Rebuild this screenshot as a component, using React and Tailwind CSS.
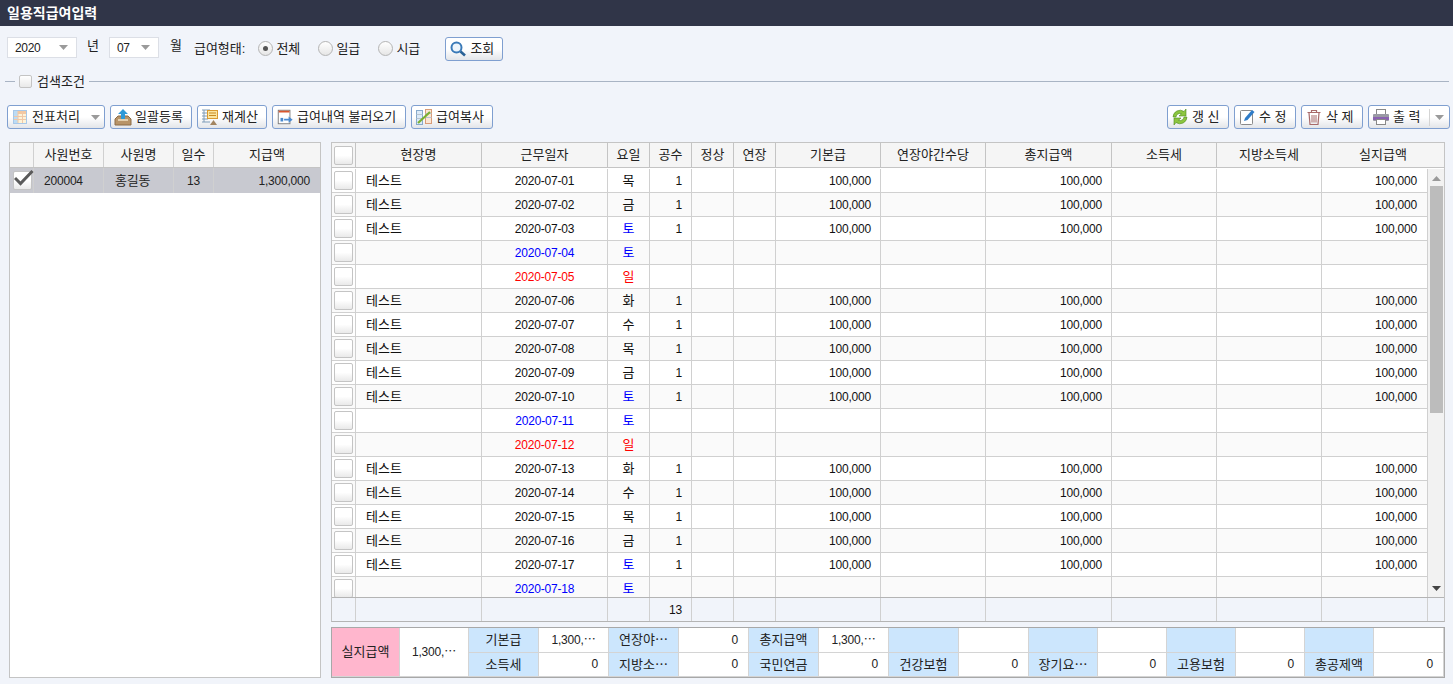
const FONT = "font-['Liberation_Sans','Noto_Sans_CJK_KR',sans-serif]";

const rowData = [
  ['테스트', '2020-07-01', '목', ''],
  ['테스트', '2020-07-02', '금', ''],
  ['테스트', '2020-07-03', '토', 'day'],
  ['', '2020-07-04', '토', 'sat'],
  ['', '2020-07-05', '일', 'sun'],
  ['테스트', '2020-07-06', '화', ''],
  ['테스트', '2020-07-07', '수', ''],
  ['테스트', '2020-07-08', '목', ''],
  ['테스트', '2020-07-09', '금', ''],
  ['테스트', '2020-07-10', '토', 'day'],
  ['', '2020-07-11', '토', 'sat'],
  ['', '2020-07-12', '일', 'sun'],
  ['테스트', '2020-07-13', '화', ''],
  ['테스트', '2020-07-14', '수', ''],
  ['테스트', '2020-07-15', '목', ''],
  ['테스트', '2020-07-16', '금', ''],
  ['테스트', '2020-07-17', '토', 'day'],
  ['', '2020-07-18', '토', 'sat'],
];

const headers = ['현장명', '근무일자', '요일', '공수', '정상', '연장', '기본급', '연장야간수당', '총지급액', '소득세', '지방소득세', '실지급액'];

const Caret = () => (
  <svg width="9" height="5" viewBox="0 0 9 5"><path d="M0 0h9L4.5 5z" fill="#9a9a9a" /></svg>
);

const Box = ({ checked }) => (
  <div className="relative w-[19px] h-[19px] rounded-[2px] border border-[#c4c4c4] bg-gradient-to-b from-white via-white to-[#e9e9e9]">
    {checked && (
      <svg className="absolute -top-[3px] left-0" width="20" height="18" viewBox="0 0 20 18">
        <path d="M1 9l5.500 5.500L18.500 2" fill="none" stroke="#5a5a5a" strokeWidth="3" />
      </svg>
    )}
  </div>
);

const Select = ({ value, w }) => (
  <div className={`${w} h-[21px] flex items-center justify-between pl-[7px] pr-[8px] bg-white border border-[#dcdfe6] text-xs tracking-[-0.3px] text-[#222]`}>
    <span>{value}</span>
    <Caret />
  </div>
);

const Radio = ({ label, on, w }) => (
  <div className={`${w} flex items-center gap-[3px]`}>
    <div className="w-[15px] h-[15px] rounded-full border border-[#b4b4b4] bg-gradient-to-b from-white to-[#e6e6e6] flex items-center justify-center">
      {on && <div className="w-[5px] h-[5px] rounded-full bg-[#555]" />}
    </div>
    <span className="text-[13px] text-[#222]">{label}</span>
  </div>
);

const Btn = ({ w, icon, children, caret, split }) => (
  <div className={`${w} h-6 shrink-0 flex items-center gap-[3px] pl-[3px] rounded-[3px] border border-[#7f9fd0] bg-gradient-to-b from-white via-white to-[#e3e5e9] text-[13px] text-[#222]`}>
    {icon}
    <span className="whitespace-pre">{children}</span>
    {caret && <span className="ml-[8px] flex"><Caret /></span>}
    {split && (
      <span className="ml-auto flex items-center h-full">
        <span className="w-px h-[17px] bg-[#d4d4d4] mr-[5px]" />
        <span className="mr-[5px] flex"><Caret /></span>
      </span>
    )}
  </div>
);

const IconSearch = () => (
  <svg width="18" height="18" viewBox="0 0 18 18">
    <circle cx="7.500" cy="7.500" r="5" fill="#eef5fb" stroke="#3a7ab8" strokeWidth="2" />
    <path d="M11.500 11.500l4.500 4" stroke="#2a6296" strokeWidth="2.600" />
  </svg>
);
const IconTable = () => (
  <svg width="18" height="16" viewBox="0 0 18 16">
    <rect x="2.500" y="1.500" width="13" height="13" fill="#fdf3d8" stroke="#a8c8e8" />
    <path d="M3 2h12v3H3z" fill="#f4c8a0" />
    <path d="M3 2h4v12H3z" fill="#bcdcf4" />
    <path d="M7 2v12M11.500 2v12M3 7.500h12M3 10.500h12" stroke="#f0c8a8" strokeWidth="1" />
  </svg>
);
const IconUpload = () => (
  <svg width="18" height="18" viewBox="0 0 18 18">
    <path d="M1 11l3-3h10l3 3v6H1z" fill="#b89468" stroke="#8c6c46" />
    <path d="M4 11h10v2H4z" fill="#e3cfae" />
    <path d="M9 1l5 5h-3v5H7V6H4z" fill="#2f9ad8" />
  </svg>
);
const IconCalc = () => (
  <svg width="18" height="18" viewBox="0 0 18 18">
    <path d="M1 2h8M1 5h6M1 8h6M1 11h6M1 14h8M3 2v12" stroke="#7f9cb8" strokeWidth="1" fill="none" />
    <rect x="6.500" y="2.500" width="10" height="8" fill="#fbe6a0" stroke="#d99a30" />
    <path d="M8 5h7M8 7.500h7" stroke="#c98a20" />
    <path d="M9 17l3.500-5 3.500 5z" fill="#a38560" />
  </svg>
);
const IconLoad = () => (
  <svg width="18" height="20" viewBox="0 0 20 20">
    <rect x="2.500" y="2.500" width="13" height="15" fill="#fff" stroke="#777" />
    <path d="M3 3h12v2H3z" fill="#d9572f" />
    <path d="M9 12h5v-2.500l4.500 3.500-4.500 3.500V14H9z" fill="#4a8ad0" />
    <path d="M5 11h3v4H5z" fill="#4a8ad0" />
  </svg>
);
const IconCopy = () => (
  <svg width="18" height="18" viewBox="0 0 18 18">
    <rect x="1.500" y="2.500" width="6" height="14" fill="#dceaf8" stroke="#88aacc" />
    <rect x="10.500" y="1.500" width="6" height="14" fill="#fbe6d4" stroke="#d89c78" />
    <path d="M1.500 6.500h6M1.500 10.500h6M10.500 5.500h6M10.500 9.500h6" stroke="#b8c4d0" />
    <path d="M3 15L15 4" stroke="#7ab030" strokeWidth="2.200" />
  </svg>
);
const IconRefresh = () => (
  <svg width="18" height="18" viewBox="0 0 18 18">
    <path d="M2 9a7 7 0 0 1 11-5.500L15 1v7H8l2.500-2.300A4 4 0 0 0 5 9z" fill="#8cc63f" stroke="#4d8a1e" strokeWidth="0.600" />
    <path d="M16 9a7 7 0 0 1-11 5.500L3 17v-7h7l-2.500 2.300A4 4 0 0 0 13 9z" fill="#8cc63f" stroke="#4d8a1e" strokeWidth="0.600" />
  </svg>
);
const IconEdit = () => (
  <svg width="18" height="18" viewBox="0 0 18 18">
    <rect x="2.500" y="2.500" width="12" height="14" rx="1" fill="#fff" stroke="#8a8a8a" />
    <path d="M6 13l1-3 7-8 2.500 2-7 8z" fill="#2f7cc8" />
  </svg>
);
const IconTrash = () => (
  <svg width="18" height="18" viewBox="0 0 18 18" fill="none" stroke="#a86a6a">
    <path d="M2.500 4.500h13M6.500 4.500v-2h5v2" strokeWidth="1.200" />
    <path d="M4 5l1 11.500h8L14 5" strokeWidth="1.200" />
    <path d="M7 7v7.500M9 7v7.500M11 7v7.500" />
  </svg>
);
const IconPrint = () => (
  <svg width="18" height="18" viewBox="0 0 18 18">
    <rect x="4.500" y="1.500" width="9" height="5" fill="#fff" stroke="#888" />
    <rect x="1" y="6" width="16" height="7" rx="1" fill="#9a9aa4" />
    <rect x="1" y="9" width="16" height="3" fill="#8a62b0" />
    <rect x="4.500" y="11.500" width="9" height="5" fill="#fff" stroke="#888" />
  </svg>
);

const lineCell = 'border-r border-[#d0d0d0] flex items-center h-full';

const LeftGrid = () => (
  <div className="w-[312px] h-[536px] shrink-0 border border-[#c4c4c4] bg-white">
    <div className="h-[25px] grid grid-cols-[24px_70px_70px_40px_1fr] bg-[#f5f5f5] border-b border-[#c4c4c4] text-[13px] text-[#222]">
      <div className="border-r border-[#d0d0d0]" />
      <div className={`${lineCell} justify-center`}>사원번호</div>
      <div className={`${lineCell} justify-center`}>사원명</div>
      <div className={`${lineCell} justify-center`}>일수</div>
      <div className="flex items-center justify-center">지급액</div>
    </div>
    <div className="h-[25px] grid grid-cols-[24px_70px_70px_40px_1fr] bg-[#c8c9d0] text-xs tracking-[-0.2px] text-[#222]">
      <div className="flex items-center pl-[3px] border-r border-[#d0d0d0]">
        <Box checked />
      </div>
      <div className="border-r border-[#d0d0d0] flex items-center pl-[10px]">200004</div>
      <div className="border-r border-[#d0d0d0] flex items-center pl-[11px] text-[13px]">홍길동</div>
      <div className="border-r border-[#d0d0d0] flex items-center justify-center">13</div>
      <div className="flex items-center justify-end pr-[10px]">1,300,000</div>
    </div>
  </div>
);

const Row = ({ row, alt }) => {
  const [site, date, day, kind] = row;
  const filled = site !== '';
  const dateColor = kind === 'sat' ? 'text-[#0000ff]' : kind === 'sun' ? 'text-[#ff0000]' : 'text-[#111]';
  const dayColor = kind === 'sun' ? 'text-[#ff0000]' : kind === '' ? 'text-[#111]' : 'text-[#0000ff]';
  const amt = 'border-r border-[#d0d0d0] flex items-center justify-end pr-[9px]';
  return (
    <div className={`h-6 shrink-0 grid grid-cols-[24px_126px_126px_42px_42px_42px_42px_105px_105px_126px_105px_105px_106px] border-b border-[#d0d0d0] text-xs tracking-[-0.2px] text-[#111] ${alt ? 'bg-[#fafafa]' : 'bg-white'}`}>
      <div className="flex items-center pl-[2px] border-r border-[#d0d0d0]"><Box /></div>
      <div className="border-r border-[#d0d0d0] flex items-center pl-[10px] text-[13px] tracking-normal">{site}</div>
      <div className={`border-r border-[#d0d0d0] flex items-center justify-center ${dateColor}`}>{date}</div>
      <div className={`border-r border-[#d0d0d0] flex items-center justify-center text-[13px] tracking-normal ${dayColor}`}>{day}</div>
      <div className={amt}>{filled ? '1' : ''}</div>
      <div className="border-r border-[#d0d0d0]" />
      <div className="border-r border-[#d0d0d0]" />
      <div className={amt}>{filled ? '100,000' : ''}</div>
      <div className="border-r border-[#d0d0d0]" />
      <div className={amt}>{filled ? '100,000' : ''}</div>
      <div className="border-r border-[#d0d0d0]" />
      <div className="border-r border-[#d0d0d0]" />
      <div className="border-r border-[#d0d0d0] flex items-center justify-end pr-[10px]">{filled ? '100,000' : ''}</div>
    </div>
  );
};

const Scrollbar = () => (
  <div className="w-4 shrink-0 flex flex-col items-center bg-[#f2f2f2] pt-[7px] pb-[6px]">
    <svg width="9" height="5" viewBox="0 0 9 5"><path d="M0 5h9L4.500 0z" fill="#9a9a9a" /></svg>
    <div className="mt-[5px] w-[13px] h-[227px] bg-[#bcbcbc]" />
    <svg className="mt-auto" width="9" height="5" viewBox="0 0 9 5"><path d="M0 0h9L4.500 5z" fill="#444" /></svg>
  </div>
);

const RightGrid = () => (
  <div className="w-[1114px] h-[480px] shrink-0 flex flex-col border border-[#c4c4c4] border-b-[#b4b4b4]">
    <div className="h-[25px] shrink-0 grid grid-cols-[24px_126px_126px_42px_42px_42px_42px_105px_105px_126px_105px_105px_1fr] bg-[#f5f5f5] border-b border-[#c4c4c4] text-[13px] text-[#222]">
      <div className="flex items-center pl-[2px] border-r border-[#c4c4c4]"><Box /></div>
      {headers.map((h, i) => (
        <div key={h} className={`flex items-center justify-center ${i < headers.length - 1 ? 'border-r border-[#c4c4c4]' : ''}`}>{h}</div>
      ))}
    </div>
    <div className="h-[430px] shrink-0 flex border-b border-[#b4b4b4] bg-white pt-px">
      <div className="flex-1 min-w-0 h-full overflow-hidden flex flex-col">
        {rowData.map((row, i) => (
          <Row key={row[1]} row={row} alt={i % 2 === 1} />
        ))}
      </div>
      <Scrollbar />
    </div>
    <div className="flex-1 grid grid-cols-[24px_126px_126px_42px_42px_42px_42px_105px_105px_126px_105px_105px_106px_1fr] text-xs tracking-[-0.2px] text-[#111]">
      {Array.from({ length: 14 }).map((_, i) => (
        <div key={i} className={`flex items-center justify-end pr-[9px] ${i < 13 ? 'border-r border-[#d0d0d0]' : ''}`}>
          {i === 4 ? '13' : ''}
        </div>
      ))}
    </div>
  </div>
);

const SumLabel = ({ children, span }) => (
  <div className={`${span ? 'row-span-2 bg-[#ffb6cd]' : 'bg-[#cce6fd]'} flex items-center justify-center border-r border-b border-[#d4d4d4] text-[13px] text-[#222]`}>
    {children}
  </div>
);

const SumValue = ({ children, span, center }) => (
  <div className={`${span ? 'row-span-2' : ''} flex items-center ${center ? 'justify-center' : 'justify-end pr-[10px]'} border-r border-b border-[#d4d4d4] text-xs tracking-[-0.2px] text-[#222]`}>
    {children}
  </div>
);

const Summary = () => (
  <div className="mt-[5px] w-[1114px] h-[51px] grid grid-cols-[68px_69px_repeat(8,70px)_repeat(5,69px)_1fr] grid-rows-2 border border-[#a8a8a8] bg-white">
    <SumLabel span>실지급액</SumLabel>
    <SumValue span center>1,300,⋯</SumValue>
    <SumLabel>기본급</SumLabel>
    <SumValue center>1,300,⋯</SumValue>
    <SumLabel>연장야⋯</SumLabel>
    <SumValue>0</SumValue>
    <SumLabel>총지급액</SumLabel>
    <SumValue center>1,300,⋯</SumValue>
    <SumLabel />
    <SumValue />
    <SumLabel />
    <SumValue />
    <SumLabel />
    <SumValue />
    <SumLabel />
    <SumValue />
    <SumLabel>소득세</SumLabel>
    <SumValue>0</SumValue>
    <SumLabel>지방소⋯</SumLabel>
    <SumValue>0</SumValue>
    <SumLabel>국민연금</SumLabel>
    <SumValue>0</SumValue>
    <SumLabel>건강보험</SumLabel>
    <SumValue>0</SumValue>
    <SumLabel>장기요⋯</SumLabel>
    <SumValue>0</SumValue>
    <SumLabel>고용보험</SumLabel>
    <SumValue>0</SumValue>
    <SumLabel>총공제액</SumLabel>
    <SumValue>0</SumValue>
  </div>
);

export default function App() {
  return (
    <div className={`${FONT} w-[1453px] h-[684px] overflow-hidden bg-[#f1f4fa] flex flex-col`}>
      <div className="h-[26px] shrink-0 bg-[#303548] flex items-center pl-[7px] text-[14px] font-bold text-white">일용직급여입력</div>

      <div className="mt-[11px] h-6 shrink-0 flex items-start pl-[7px]">
        <Select value="2020" w="w-[70px]" />
        <span className="ml-[10px] text-[13px] text-[#222] -mt-[1px]">년</span>
        <div className="ml-[10px]"><Select value="07" w="w-[50px]" /></div>
        <span className="ml-[11px] text-[13px] text-[#222] -mt-[1px]">월</span>
        <span className="ml-[12px] text-[13px] text-[#222] mt-[2px]">급여형태:</span>
        <div className="ml-[13px] mt-[2px] flex">
          <Radio label="전체" on w="w-[60px]" />
          <Radio label="일급" w="w-[60px]" />
          <Radio label="시급" w="w-[67px]" />
        </div>
        <Btn w="w-[58px]" icon={<IconSearch />}>조회</Btn>
      </div>

      <div className="mt-[13px] h-[15px] shrink-0 flex items-center pl-[5px] pr-[4px]">
        <div className="w-[10px] h-px bg-[#a9b4c4]" />
        <div className="ml-[4px] w-[13px] h-[13px] rounded-[2px] border border-[#c4c4c4] bg-gradient-to-b from-white to-[#e9e9e9]" />
        <span className="ml-[5px] text-[13px] text-[#222]">검색조건</span>
        <div className="ml-[4px] flex-1 h-px bg-[#a9b4c4]" />
      </div>

      <div className="mt-4 h-6 shrink-0 flex items-center gap-[5px] pl-[7px] pr-[3px]">
        <Btn w="w-[98px]" icon={<IconTable />} caret>전표처리</Btn>
        <Btn w="w-[82px]" icon={<IconUpload />}>일괄등록</Btn>
        <Btn w="w-[70px]" icon={<IconCalc />}>재계산</Btn>
        <Btn w="w-[134px]" icon={<IconLoad />}>급여내역 불러오기</Btn>
        <Btn w="w-[82px]" icon={<IconCopy />}>급여복사</Btn>
        <div className="flex-1" />
        <Btn w="w-[62px]" icon={<IconRefresh />}>{'갱 신'}</Btn>
        <Btn w="w-[62px]" icon={<IconEdit />}>{'수 정'}</Btn>
        <Btn w="w-[62px]" icon={<IconTrash />}>{'삭 제'}</Btn>
        <Btn w="w-[82px]" icon={<IconPrint />} split>{'출 력'}</Btn>
      </div>

      <div className="mt-[13px] flex-1 flex pl-[9px] gap-[10px]">
        <LeftGrid />
        <div className="flex flex-col">
          <RightGrid />
          <Summary />
        </div>
      </div>
    </div>
  );
}
